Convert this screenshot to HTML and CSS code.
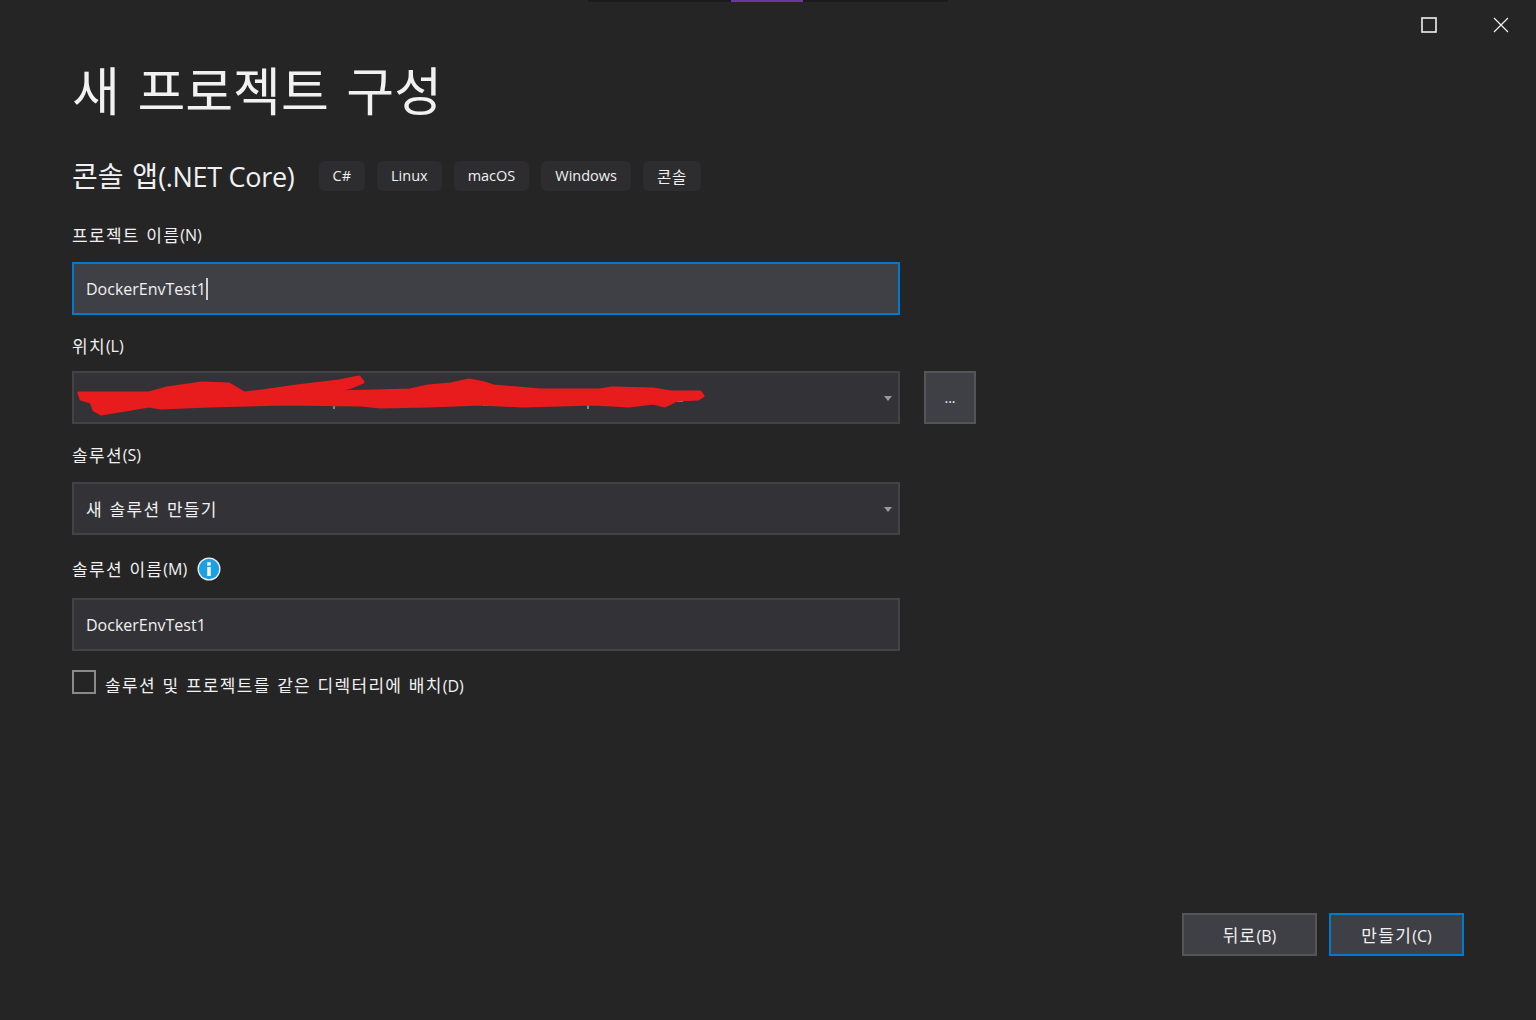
FILE: index.html
```html
<!DOCTYPE html>
<html lang="ko">
<head>
<meta charset="utf-8">
<title>새 프로젝트 구성</title>
<link rel="stylesheet" href="styles.css">
</head>
<body>
<div class="window">
  <div class="strip"><span class="strip-dark"></span><span class="strip-accent"></span><span class="strip-dark strip-end"></span></div>
  <div class="titlebar">
    <svg class="winbtn" width="16" height="16" viewBox="0 0 16 16"><rect x="1" y="1" width="14" height="14" fill="none" stroke="#f1f1f1" stroke-width="1.6"/></svg>
    <svg class="winbtn" width="16" height="16" viewBox="0 0 16 16"><path d="M1 1 15 15M15 1 1 15" fill="none" stroke="#f1f1f1" stroke-width="1.2"/></svg>
  </div>
  <main class="content">
    <h1 class="title">새 프로젝트 구성</h1>
    <div class="subhead">
      <h2 class="subtitle"><span class="ko">콘솔 앱</span>(.NET Core)</h2>
      <span class="tag">C#</span><span class="tag">Linux</span><span class="tag">macOS</span><span class="tag">Windows</span><span class="tag tag-ko">콘솔</span>
    </div>
    <div class="label first"><span class="ko">프로젝트 이름</span>(N)</div>
    <div class="field focused"><span>DockerEnvTest1</span><i class="caret"></i></div>

    <div class="label loc"><span class="ko">위치</span>(L)</div>
    <div class="row">
      <div class="field select redacted">
        <svg class="scribble" width="640" height="50" viewBox="74 373 640 50">
          <path d="M244 392v3M247 392v3M334 405v4M484 402v4M487 402v4M588 405v4M677 401h6" stroke="#d8d8d8" stroke-width="1" fill="none"/>
          <path d="M79 393 149 393 167 388 202 383 229 384 244 393 262 391 297 386 339 381 359 377 363 382 351 387 333 392 374 391 410 390 428 386 451 384 469 380 484 383 493 386 517 388 540 390 600 390 612 388 653 389 671 392 700 392 703 396 698 399 677 400 665 406 653 403 629 406 594 404 523 406 481 404 428 406 380 407 362 405 285 404 208 406 161 408 149 406 101 414 94 410 91 402 81 399Z" fill="#e81c1c" stroke="#e81c1c" stroke-width="3" stroke-linejoin="round"/>
        </svg>
        <i class="arrow"></i>
      </div>
      <button class="browse">...</button>
    </div>

    <div class="label sol"><span class="ko">솔루션</span>(S)</div>
    <div class="field select"><span class="ko">새 솔루션 만들기</span><i class="arrow"></i></div>

    <div class="label solname"><span class="ko">솔루션 이름</span>(M)
      <svg class="info" width="24" height="24" viewBox="0 0 24 24"><circle cx="12" cy="12" r="11.5" fill="#f1f1f1"/><circle cx="12" cy="12" r="10.2" fill="#1ba1e2"/><rect x="10.2" y="10" width="3.6" height="9" fill="#f1f1f1"/><rect x="10.2" y="5.2" width="3.6" height="3.4" fill="#f1f1f1"/></svg>
    </div>
    <div class="field plain"><span>DockerEnvTest1</span></div>

    <label class="check"><i class="box"></i><span class="check-text"><span class="ko">솔루션 및 프로젝트를 같은 디렉터리에 배치</span>(D)</span></label>
  </main>
  <footer class="footer">
    <button class="action"><span class="ko">뒤로</span>(B)</button>
    <button class="action primary"><span class="ko">만들기</span>(C)</button>
  </footer>
</div>
</body>
</html>
```
FILE: styles.css
```css
* { box-sizing: border-box; }
html, body { margin: 0; padding: 0; height: 100%; background: #252526; }
body { font-family: "Open Sans", "Noto Sans CJK KR", sans-serif; color: #f1f1f1; overflow: hidden; }
.window { height: 1020px; display: flex; flex-direction: column; }

.ko { font-family: "Noto Sans CJK KR", sans-serif; font-size: 17px; letter-spacing: 1.3px; word-spacing: 0.5px; }

.strip { height: 2px; display: flex; padding-left: 588px; }
.strip-dark { width: 143px; background: #1b1b1c; }
.strip-accent { width: 72px; background: #68379f; }
.strip-end { width: 145px; }

.titlebar { height: 38px; display: flex; justify-content: flex-end; align-items: flex-start; gap: 56px; padding: 15px 27px 0 0; }
.winbtn { display: block; }

.content { padding-left: 72px; flex: 1; }
.title { margin: 21px 0 0; height: 56px; font-size: 52px; line-height: 56px; font-weight: 400; font-family: "Noto Sans CJK KR", sans-serif; word-spacing: 3px; }
.subhead { display: flex; align-items: center; height: 30px; margin-top: 44px; gap: 12px; }
.subtitle { margin: 0 12px 0 0; font-size: 27px; font-weight: 400; line-height: 30px; white-space: nowrap; letter-spacing: -0.3px; }
.subtitle .ko { font-size: 28px; letter-spacing: 0; word-spacing: 1px; font-weight: 400; }
.tag { height: 30px; padding: 0 14px; background: #2d2d30; border-radius: 6px; font-size: 14.5px; line-height: 30px; }
.tag-ko { font-family: "Noto Sans CJK KR", sans-serif; font-size: 15.5px; letter-spacing: 0.7px; }

.label { font-size: 16px; line-height: 24px; height: 24px; display: flex; align-items: center; white-space: nowrap; }
.label.first { margin-top: 32px; }
.label.loc { margin-top: 19px; }
.label.sol { margin-top: 19px; }
.label.solname { margin-top: 22px; }

.field { width: 828px; height: 53px; border: 2px solid #434346; background: #333337; display: flex; align-items: center; padding: 0 12px; font-size: 16px; position: relative; }
.field.focused { margin-top: 15px; border-color: #007acc; background: #3f4046; }
.field.select { justify-content: space-between; }
.label.sol + .field { margin-top: 15px; }
.field.plain { margin-top: 17px; }
.caret { width: 2px; height: 22px; background: #d0d0d0; margin-left: 0; }

.row { display: flex; gap: 24px; margin-top: 13px; }
.arrow { position: absolute; right: 6px; top: 23px; width: 0; height: 0; border-left: 4.5px solid transparent; border-right: 4.5px solid transparent; border-top: 5px solid #999; }
.scribble { position: absolute; left: 0; top: 0; overflow: visible; }

.browse { width: 52px; height: 53px; border: 2px solid #555557; background: #3f3f46; color: #f1f1f1; font: 14px "Open Sans", sans-serif; padding: 0; }

.info { margin-left: 10px; flex: none; }

.check { display: flex; align-items: center; margin-top: 19px; height: 24px; font-size: 16px; }
.box { width: 24px; height: 24px; border: 2px solid #8a8a8a; flex: none; }
.check-text { margin-left: 9px; position: relative; top: 2px; white-space: nowrap; }

.footer { display: flex; justify-content: flex-end; gap: 12px; padding: 0 72px 64px 0; }
.action { width: 135px; height: 43px; border: 2px solid #555557; background: #3f3f46; color: #f1f1f1; font: 16px "Open Sans", "Noto Sans CJK KR", sans-serif; padding: 0; }
.action.primary { border-color: #007acc; }
```
